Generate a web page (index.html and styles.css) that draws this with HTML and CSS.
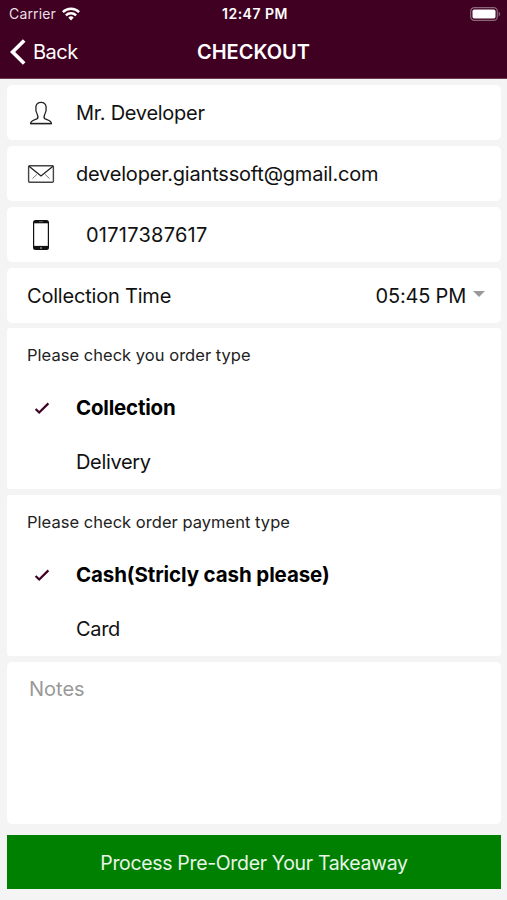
FILE: index.html
```
<!DOCTYPE html>
<html lang="en">
<head>
    <meta charset="UTF-8">
    <title>Checkout</title>
    <link rel="stylesheet" href="styles.css">
</head>
<body>
<header>
    <div class="status-bar">
        <div class="carrier">
            <span>Carrier</span>
            <svg width="18" height="14" viewBox="0 0 18 14" fill="none" stroke="#fff" stroke-width="2.5">
                <path d="M0.9 5.1a11.6 11.6 0 0 1 16.2 0"/>
                <path d="M3.9 8.3a7.3 7.3 0 0 1 10.2 0"/>
                <path d="M9 13.4l-2.7-2.8a3.8 3.8 0 0 1 5.4 0z" fill="#fff" stroke="none"/>
            </svg>
        </div>
        <span class="clock">12:47 PM</span>
        <svg class="battery" width="31" height="14" viewBox="0 0 31 14">
            <rect x="0.7" y="0.7" width="26.6" height="12.6" rx="3.6" fill="none" stroke="#8b6779" stroke-width="1.2"/>
            <rect x="2.5" y="2.5" width="23" height="9" rx="1.8" fill="#fff"/>
            <path d="M28.7 4.6q3 2.4 0 4.8z" fill="#8b6779"/>
        </svg>
    </div>
    <nav class="nav-bar">
        <a class="back">
            <svg width="16" height="26" viewBox="0 0 16 26" fill="none" stroke="#fff" stroke-width="3.7">
                <path d="M14.2 1.5L2.6 13l11.6 11.5"/>
            </svg>
            <span>Back</span>
        </a>
        <h1>CHECKOUT</h1>
    </nav>
</header>
<main>
    <div class="card row">
        <svg class="icon" width="28" height="32" viewBox="0 0 28 32" fill="none" stroke="#222" stroke-width="1.3">
            <path d="M3.6 26.6c.1-3.3 3.6-3.5 6.3-4.7 1.4-.8 1.3-2.4.5-4.2-1.6-2.8-1.9-5.3-1.5-8 .5-3 2.5-4.3 5.1-4.3s4.6 1.3 5.1 4.3c.4 2.7.1 5.2-1.5 8-.8 1.8-.9 3.4.5 4.2 2.7 1.2 6.2 1.4 6.3 4.7z"/>
            <path d="M3.4 26.5h21.2" stroke-width="1.4"/>
        </svg>
        <span class="name">Mr. Developer</span>
    </div>
    <div class="card row">
        <svg class="icon" width="28" height="32" viewBox="0 0 28 32" fill="none" stroke="#222">
            <rect x="1.6" y="7.7" width="24.8" height="16.6" rx="1" stroke="#444" stroke-width="1.4"/>
            <path d="M2 8.2l12 9.8 12-9.8" stroke-width="1.3"/>
            <path d="M5.5 20.6l4.4-4.2M22.5 20.6l-4.4-4.2" stroke="#777"/>
        </svg>
        <span class="email">developer.giantssoft@gmail.com</span>
    </div>
    <div class="card row">
        <svg class="icon" width="28" height="32" viewBox="0 0 28 32">
            <rect x="6" y="1" width="16" height="30" rx="2.5" fill="#111"/>
            <path d="M7.2 4.3h13.6v22.6H7.2z" fill="#fff"/>
            <path d="M12 2.7h4" stroke="#777" stroke-width=".8"/>
            <circle cx="14" cy="28.9" r="1" fill="#888"/>
        </svg>
        <span class="phone">01717387617</span>
    </div>
    <div class="card row time-row">
        <span class="time-label">Collection Time</span>
        <span class="time">05:45 PM</span>
        <span class="caret"></span>
    </div>
    <section class="card options">
        <p class="type-title">Please check you order type</p>
        <div class="option selected">
            <svg width="16" height="14" viewBox="0 0 16 14" fill="none" stroke="#400022" stroke-width="2.2">
                <path d="M1.6 8l3.6 3.5 9.2-9.1"/>
            </svg>
            <span class="collection">Collection</span>
        </div>
        <div class="option"><span>Delivery</span></div>
    </section>
    <section class="card options payment">
        <p class="payment-title">Please check order payment type</p>
        <div class="option selected">
            <svg width="16" height="14" viewBox="0 0 16 14" fill="none" stroke="#400022" stroke-width="2.2">
                <path d="M1.6 8l3.6 3.5 9.2-9.1"/>
            </svg>
            <span class="cash">Cash(Stricly cash please)</span>
        </div>
        <div class="option"><span>Card</span></div>
    </section>
    <div class="card notes">Notes</div>
    <button class="process">Process Pre-Order Your Takeaway</button>
</main>
</body>
</html>
```
FILE: styles.css
```
* {
    box-sizing: border-box;
    margin: 0;
    padding: 0;
}

body {
    background-color: #f4f4f4;
    font-family: Inter, 'Liberation Sans', sans-serif;
    font-size: 20px;
    line-height: 24px;
    color: #111;
    height: 900px;
    white-space: nowrap;
    overflow: hidden;
}

svg {
    display: block;
    flex: none;
}

header {
    height: 79px;
    background-color: #400022;
    color: #fff;
    border-bottom: 1px solid #6b3c54;
}

.status-bar {
    height: 27px;
    padding: 0 6px 0 9px;
    display: grid;
    grid-template-columns: 1fr auto 1fr;
    align-items: center;
    font-size: 14px;
}

.carrier {
    display: flex;
    align-items: center;
    gap: 6px;
    color: #eadfe5;
    letter-spacing: 0.15px;
}

.clock {
    font-weight: 600;
    font-size: 14px;
    letter-spacing: 0.5px;
}

.battery {
    justify-self: end;
}

.nav-bar {
    height: 50px;
    padding: 0 10px;
    display: grid;
    grid-template-columns: 1fr auto 1fr;
    align-items: center;
}

.back {
    display: flex;
    align-items: center;
    gap: 7px;
    letter-spacing: -0.5px;
}

h1 {
    font-size: 20px;
    font-weight: 600;
    letter-spacing: 0;
}

main {
    padding: 6px 6px 0 7px;
}

.card {
    background-color: #fff;
    border-radius: 5px;
    margin-bottom: 6px;
}

.row {
    height: 55px;
    padding: 0 20px;
    display: flex;
    align-items: center;
}

.icon {
    margin-right: 21px;
}

.name {
    letter-spacing: -0.27px;
}

.email {
    letter-spacing: -0.2px;
}

.phone {
    padding-left: 10px;
    letter-spacing: 0.25px;
}

.time-row {
    padding-right: 16px;
    margin-bottom: 5px;
}

.time {
    margin-left: auto;
    letter-spacing: -0.2px;
}

.time-label {
    letter-spacing: -0.2px;
}

.caret {
    border: 6px solid transparent;
    border-top-color: #999;
    border-bottom: 0;
    margin: -3px 0 0 7px;
}

.options {
    height: 161px;
    padding-top: 15px;
    border-radius: 3px;
}

.options p {
    padding-left: 20px;
    font-size: 16.5px;
    letter-spacing: 0.03px;
    margin-bottom: 14px;
    color: #222;
}

.option {
    height: 54px;
    padding-left: 27px;
    display: flex;
    align-items: center;
}

.option span {
    margin-left: 42px;
    letter-spacing: -0.35px;
}

.selected {
    font-weight: 700;
    color: #000;
}

.selected span {
    margin-left: 26px;
    font-size: 20.5px;
}

.selected .collection {
    letter-spacing: -0.2px;
}

.selected .cash {
    letter-spacing: -0.11px;
}

.notes {
    height: 162px;
    padding: 15px 22px;
    color: #999;
    margin-bottom: 11px;
}

.process {
    width: 100%;
    height: 54px;
    padding-top: 1px;
    border: 0;
    background-color: #008000;
    color: #e8f5e8;
    font: inherit;
    font-size: 19.5px;
    letter-spacing: -0.34px;
}
```
